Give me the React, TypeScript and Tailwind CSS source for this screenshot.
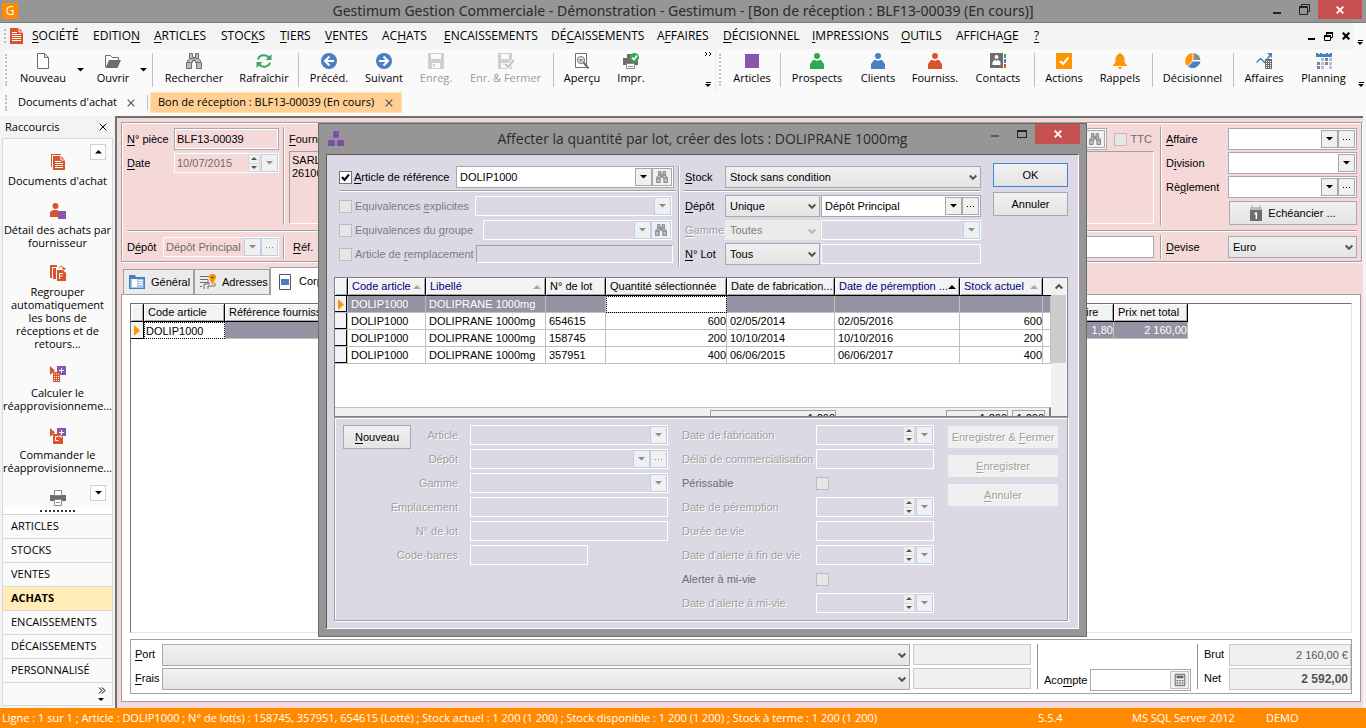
import type { ReactNode } from 'react';

// Menu entries, "_" marks the access key
const menuItems = [
  { label: '_SOCIÉTÉ', width: 'w-[61px]' },
  { label: 'EDITIO_N', width: 'w-[61px]' },
  { label: '_ARTICLES', width: 'w-[67px]' },
  { label: 'STOC_KS', width: 'w-[59px]' },
  { label: '_TIERS', width: 'w-[45px]' },
  { label: '_VENTES', width: 'w-[57px]' },
  { label: 'AC_HATS', width: 'w-[62px]' },
  { label: '_ENCAISSEMENTS', width: 'w-[107px]' },
  { label: 'DÉ_CAISSEMENTS', width: 'w-[106px]' },
  { label: 'A_FFAIRES', width: 'w-[66px]' },
  { label: '_DÉCISIONNEL', width: 'w-[89px]' },
  { label: '_IMPRESSIONS', width: 'w-[89px]' },
  { label: '_OUTILS', width: 'w-[55px]' },
  { label: 'AFFICHA_GE', width: 'w-[78px]' },
  { label: '_?', width: 'w-[16px]' },
];

const shortcuts = [
  { icon: 'docs', lines: ["Documents d'achat"] },
  { icon: 'personBox', lines: ['Détail des achats par', 'fournisseur'] },
  { icon: 'group', lines: ['Regrouper', 'automatiquement', 'les bons de', 'réceptions et de', 'retours...'] },
  { icon: 'calc', lines: ['Calculer le', 'réapprovisionneme...'] },
  { icon: 'order', lines: ['Commander le', 'réapprovisionneme...'] },
  { icon: 'printer', lines: [] },
];

const modules = ['ARTICLES', 'STOCKS', 'VENTES', 'ACHATS', 'ENCAISSEMENTS', 'DÉCAISSEMENTS', 'PERSONNALISÉ'];

const lots = [
  { lot: '', qty: '', made: '', expires: '', stock: '' },
  { lot: '654615', qty: '600', made: '02/05/2014', expires: '02/05/2016', stock: '600' },
  { lot: '158745', qty: '200', made: '10/10/2014', expires: '10/10/2016', stock: '200' },
  { lot: '357951', qty: '400', made: '06/06/2015', expires: '06/06/2017', stock: '400' },
];

const lotColumns = [
  { label: 'Code article', sort: 'gray' },
  { label: 'Libellé', sort: 'gray' },
  { label: 'N° de lot', sort: '' },
  { label: 'Quantité sélectionnée', sort: '' },
  { label: 'Date de fabrication...', sort: '' },
  { label: 'Date de péremption ...', sort: 'black' },
  { label: 'Stock actuel', sort: 'gray' },
];

const icons: Record<string, ReactNode> = {
  newDoc: <path d="M2.5.5h7l4 4v11h-11zM9.5.5v4h4" fill="#fff" stroke="#6d6d6d" />,
  folder: (
    <>
      <path d="M.5 14V2.500h5l2 2h6v3" fill="none" stroke="#6d6d6d" />
      <path d="M4 7h12l-3.500 8H.5z" fill="#6d6d6d" />
    </>
  ),
  binoculars: (
    <>
      <path d="M3.500.5h3v4h3v-4h3v5l2 2v2h1v6h-5v-6h-1v-2h-3v2h-1v6h-5v-6h1v-2l2-2z" fill="#bdbdbd" stroke="#6d6d6d" />
      <path d="M3.500 5.500h3M9.500 5.500h3M1.500 9.500h4M10.500 9.500h4M8 5v3" stroke="#6d6d6d" />
    </>
  ),
  refresh: (
    <>
      <path d="M2 6.500A6 5.500 0 0 1 13 5M14 9.500A6 5.500 0 0 1 3 11" fill="none" stroke="#3aa864" strokeWidth="2" />
      <path d="M15.500 1v6h-6zM.5 15V9h6z" fill="#3aa864" />
    </>
  ),
  prev: (
    <>
      <circle cx="8" cy="8" r="8" fill="#4a7fc1" />
      <path d="M8.500 3.500 4 8l4.500 4.500M4.500 8H13" fill="none" stroke="#fff" strokeWidth="2" />
    </>
  ),
  next: (
    <>
      <circle cx="8" cy="8" r="8" fill="#4a7fc1" />
      <path d="M7.500 3.500 12 8l-4.500 4.500M11.500 8H3" fill="none" stroke="#fff" strokeWidth="2" />
    </>
  ),
  save: <path d="M0 0h16v16H0zM3 1v5h10V1zM4 10v5h8v-5zM5 11h2v3H5z" fill="#cfcfcf" fillRule="evenodd" />,
  saveClose: (
    <>
      <path d="M0 0h14v16H0zM3 1v5h8V1zM3 10v5h8v-5z" fill="#cfcfcf" fillRule="evenodd" />
      <path d="m7 11 3 3 6-7" fill="none" stroke="#fafafa" strokeWidth="4" />
      <path d="m7 11 3 3 6-7" fill="none" stroke="#c4c4c4" strokeWidth="2" />
    </>
  ),
  preview: (
    <>
      <path d="M1.500.5h11v14h-11z" fill="#fff" stroke="#6d6d6d" />
      <circle cx="7" cy="7" r="3.500" fill="#eee" stroke="#6d6d6d" />
      <path d="M5.500 6.500h3M5.500 8h3" stroke="#6d6d6d" />
      <path d="m9.500 9.500 5 6" stroke="#6d6d6d" strokeWidth="2" />
    </>
  ),
  print: (
    <>
      <path d="M4 1h6v4H4zM0 5h15v7H0z" fill="#6d6d6d" />
      <path d="M3.500 10.500h8v5h-8zM5 13.500h5" fill="#fff" stroke="#8b8b8b" />
      <circle cx="11.500" cy="4.500" r="4.500" fill="#2eaa55" />
      <path d="m9 4.500 2 2 3-4" fill="none" stroke="#fff" strokeWidth="1.500" />
    </>
  ),
  printer: (
    <>
      <path d="M0 5h16v6H0z" fill="#6d6d6d" />
      <path d="M4.500.5h7v5h-7zM4.500 9.500h7v6h-7zM6 12.500h4" fill="#fff" stroke="#8b8b8b" />
    </>
  ),
  square: <path d="M1 1h14v14H1z" fill="#8a56ac" />,
  contact: (
    <>
      <path d="M0 0h13v15H0z" fill="#6d6d6d" />
      <circle cx="6.500" cy="4" r="2" fill="#fff" />
      <path d="M2.500 12V9l2-2h1l1 1 1-1h1l2 2v3z" fill="#fff" />
      <path d="M14 1h2v4h-2z" fill="#2eaa55" />
      <path d="M14 6h2v4h-2z" fill="#4a7fc1" />
      <path d="M14 11h2v4h-2z" fill="#d9532c" />
    </>
  ),
  actions: (
    <>
      <path d="M0 0h16v16H0z" fill="#ff9500" />
      <path d="m4 8 3 3 5.500-6.500" fill="none" stroke="#fff" strokeWidth="2" />
    </>
  ),
  bell: (
    <path d="M7 0h2v1c3 1 3.500 3 3.500 6 0 3 1 3.500 2.500 5v1H1v-1c1.500-1.500 2.500-2 2.500-5 0-3 .5-5 3.500-6zM6 14h4l-1 2H7z" fill="#ff9500" />
  ),
  pie: (
    <>
      <path d="M7.500 8V0A8 8 0 0 0 2 13z" fill="#ff9500" />
      <path d="M8.500 7V0A7.500 7.500 0 0 1 15.500 7z" fill="#8b8b8b" />
      <path d="M8 8.500h7.500A8 8 0 0 1 3 13.500z" fill="#4a7fc1" />
    </>
  ),
  affairs: (
    <>
      <path d="m.5 9.500 4-4 4 4 6-7.500" fill="none" stroke="#4a7fc1" strokeWidth="1.500" />
      <path d="M11 0h5v5z" fill="#4a7fc1" />
      <path d="M9 6h7v10H9z" fill="#6d6d6d" />
      <path d="M10 8.500h5M10 10.500h5M10 12.500h5M10 14.500h5" stroke="#fff" strokeDasharray="1 1" />
    </>
  ),
  planning: (
    <>
      <path d="M0 0h2v1h2V0h2v1h4V0h2v1h2V0h2v4H0z" fill="#4a7fc1" />
      <path d="M5 5h3v3H5zM13 5h3v3h-3zM5 9h3v3H5zM13 9h3v3h-3zM5 13h3v3H5zM13 13h3v3h-3z" fill="#a9c1de" />
      <path d="M9 5h3v3H9zM1 9h3v3H1zM9 9h3v3H9zM1 13h3v3H1z" fill="#7d8794" />
    </>
  ),
  docs: (
    <>
      <path d="M1 0h10v1H2v12H1z" fill="#d9532c" />
      <path d="M3 2h8l4 4v10H3z" fill="#d9532c" />
      <path d="M11 2v4h4M5 7.500h6M5 9.500h8M5 11.500h8M5 13.500h8" fill="none" stroke="#fff" />
    </>
  ),
  personBox: (
    <>
      <circle cx="5.500" cy="3" r="3" fill="#d9532c" />
      <path d="M0 14V9l3-2h5v7z" fill="#d9532c" />
      <path d="M8 8h8v8H8z" fill="#8a56ac" />
    </>
  ),
  group: (
    <>
      <path d="M0 0h7v2H2v11H0zM3 3h3v11H3z" fill="#d9532c" />
      <path d="M7 5h6l3 3v8H7z" fill="#d9532c" />
      <path d="M9.500 14V8.500H13M9.500 11h3" fill="none" stroke="#fff" />
      <path d="M9 2.500q3-3 5 1" fill="none" stroke="#d9532c" />
      <path d="M12 3h4l-2 2.500z" fill="#d9532c" />
    </>
  ),
  calc: (
    <>
      <path d="m0 0 5 4.500L0 9z" fill="#d9532c" />
      <path d="M7 0h9v9H7z" fill="#8a56ac" />
      <path d="M9 4.500h5M11.500 2v5" stroke="#fff" />
      <path d="M3 6h7v10H3z" fill="#d9532c" />
      <path d="M4 8h5M4 10.500h5M4 12.500h5M4 14.500h5" stroke="#fff" strokeDasharray="1 1" />
    </>
  ),
  order: (
    <>
      <path d="m0 0 5 4.500L0 9z" fill="#d9532c" />
      <path d="M7 0h9v8H7z" fill="#8a56ac" />
      <path d="M9 4.500h5M11.500 2v5" stroke="#fff" />
      <path d="M3 6h7l3 3v7H3z" fill="#d9532c" />
      <path d="M8.500 8.500h-3v4h3M10 7v2h2" fill="none" stroke="#fff" />
    </>
  ),
  general: (
    <>
      <path d="M0 1h6l1 2h9v12H0z" fill="#4a7fc1" />
      <path d="M1.500 5h13v9h-13z" fill="#a9c8ec" />
      <path d="M3 5h5v8H3z" fill="#fff" />
      <path d="M9.500 6.500h4M9.500 8.500h4M9.500 10.500h4" stroke="#fff" />
    </>
  ),
  address: (
    <>
      <path d="M0 2.500h9M0 5.500h8v3H0M4 15v-5h5v-2M8 15v-3h7v-3M0 12.500h2" fill="none" stroke="#6d6d6d" />
      <path d="M12.500 11 9.500 5a3.500 3.500 0 1 1 6 0z" fill="#ff9500" />
      <circle cx="12.500" cy="3.500" r="1" fill="#333" />
    </>
  ),
  body: (
    <>
      <path d="M2.500.5h11v15h-11z" fill="#fff" stroke="#555" />
      <path d="M4 5h8v6H4z" fill="#4a7fc1" />
    </>
  ),
  calendar: (
    <>
      <path d="M2 0h2v3H2zM12 0h2v3h-2zM0 2h16v3H0z" fill="#bdbdbd" />
      <path d="M0 5h16v11H0z" fill="#6d6d6d" />
      <path d="M6 8.500h2.500V14" fill="none" stroke="#fff" strokeWidth="2" />
    </>
  ),
  bricks: (
    <>
      <path d="M5 0h6v7H5zM0 9h7v6H0zM9 9h7v6H9z" fill="#8e52b5" />
      <path d="M5 2.500h6M5 4.500h6M0 11.500h7M0 13.500h7M9 11.500h7M9 13.500h7M7.500 0v7M2.500 9v6M4.500 9v6M11.500 9v6M13.500 9v6" stroke="#6b4a85" strokeWidth=".6" />
    </>
  ),
  orangeDoc: (
    <>
      <path d="M0 0h9l4 4v12H0z" fill="#d9532c" />
      <path d="M9 0v4h4M2 4.500h5M2 6.500h9M2 8.500h9M2 10.500h9M2 12.500h9" fill="none" stroke="#fff" />
    </>
  ),
  calculator: (
    <>
      <path d="M2.500 1.500h11v13h-11z" fill="#eee" stroke="#555" />
      <path d="M4 3h8v3H4z" fill="#666" />
      <path d="M4 8.500h8M4 10.500h8M4 12.500h8" stroke="#555" strokeDasharray="2 1" />
    </>
  ),
};

function Icon({ name }: { name: string }) {
  return (
    <svg className="h-4 w-4 shrink-0" viewBox="0 0 16 16" aria-hidden="true">
      {icons[name]}
    </svg>
  );
}

function Person({ color }: { color: string }) {
  return (
    <svg className="h-4 w-4" viewBox="0 0 16 16" fill={color} aria-hidden="true">
      <circle cx="8" cy="3" r="3" />
      <path d="M1 16v-5l3-4h2l2 1 2-1h2l3 4v5z" />
    </svg>
  );
}

function Tri({ up = false, size = 'w-[7px]' }: { up?: boolean; size?: string }) {
  return (
    <svg className={`${size} shrink-0`} viewBox="0 0 8 4" fill="currentColor" aria-hidden="true">
      <path d={up ? 'M0 4h8L4 0z' : 'M0 0h8L4 4z'} />
    </svg>
  );
}

function Key({ text }: { text: string }) {
  const [before, after] = text.split('_');
  if (after === undefined) return <>{text}</>;
  return (
    <>
      {before}
      <span className="underline underline-offset-2">{after[0]}</span>
      {after.slice(1)}
    </>
  );
}

function Grip({ height = 'h-8' }: { height?: string }) {
  return <div className={`${height} ml-0.5 mr-1.5 w-0 shrink-0 border-l-2 border-dotted border-[#bdbdbd]`} />;
}

function Tool({ icon, label, width, disabled = false }: { icon: ReactNode; label: string; width: string; disabled?: boolean }) {
  return (
    <button
      type="button"
      disabled={disabled}
      className={`${width} flex shrink-0 flex-col items-center whitespace-nowrap pt-1 disabled:text-[#9a9a9a]`}
    >
      {typeof icon === 'string' ? <Icon name={icon} /> : icon}
      <span className="leading-[18px]">{label}</span>
    </button>
  );
}

function ToolSep() {
  return <div className="my-1 ml-[3px] mr-0.5 w-px shrink-0 bg-[#c0c0c0]" />;
}

function More({ top = false }: { top?: boolean }) {
  return (
    <button type="button" aria-label="Plus d'options" className="ml-auto flex w-3 shrink-0 flex-col items-center pb-1 pt-0.5">
      {top && (
        <svg className="h-2 w-2" viewBox="0 0 8 8" aria-hidden="true">
          <path d="m1 1 2 2-2 2M5 1l2 2-2 2" fill="none" stroke="#000" />
        </svg>
      )}
      <span className="mt-auto mb-px h-px w-[5px] bg-black" />
      <Tri size="w-[6px]" />
    </button>
  );
}

function VLine() {
  return <div className="w-0.5 shrink-0 border-l border-r border-l-[#a0a0a0] border-r-white" />;
}

function HLine() {
  return <div className="h-0.5 shrink-0 border-b border-t border-b-white border-t-[#a0a0a0]" />;
}

// Square button at the end of a field
function EndButton({ children, label, width = 'w-[17px]', disabled = false }: { children: ReactNode; label: string; width?: string; disabled?: boolean }) {
  return (
    <button
      type="button"
      aria-label={label}
      disabled={disabled}
      className={`${width} flex h-full shrink-0 items-center justify-center border border-[#a8a8a8] bg-[#f0f0f0] text-black disabled:border-[#b9d1ea] disabled:text-[#8c8c8c]`}
    >
      {children}
    </button>
  );
}

type FieldProps = {
  id: string;
  label?: string;
  width?: string;
  value?: string;
  arrow?: boolean;
  dots?: boolean;
  search?: boolean;
  spin?: boolean;
  disabled?: boolean;
};

function Field({ id, label, width = 'flex-1', value = '', arrow, dots, search, spin, disabled = false }: FieldProps) {
  const box = disabled ? 'h-5 border-white bg-transparent text-[#6d6d6d]' : 'h-[22px] border-[#a8a8b0] bg-white p-px';
  return (
    <div className={`${width} ${box} flex min-w-0 shrink-0 items-center border`}>
      <input
        id={id}
        aria-label={label}
        defaultValue={value}
        disabled={disabled}
        className="h-full w-0 min-w-0 flex-1 bg-transparent px-0.5 outline-none"
      />
      {spin && (
        <span className="mr-px flex h-full w-3 shrink-0 flex-col border border-[#d8d8d8] bg-[#f0f0f0] text-[#555]">
          <button type="button" aria-label="Augmenter" disabled={disabled} className="flex flex-1 items-center justify-center border-b border-[#d8d8d8]">
            <Tri up size="w-[6px]" />
          </button>
          <button type="button" aria-label="Diminuer" disabled={disabled} className="flex flex-1 items-center justify-center">
            <Tri size="w-[6px]" />
          </button>
        </span>
      )}
      {arrow && (
        <EndButton label="Dérouler" disabled={disabled}>
          <Tri />
        </EndButton>
      )}
      {dots && (
        <EndButton label="Parcourir" disabled={disabled}>
          <svg className="w-[9px]" viewBox="0 0 9 1" fill="currentColor" aria-hidden="true">
            <path d="M1 0h1v1H1zM4 0h1v1H4zM7 0h1v1H7z" />
          </svg>
        </EndButton>
      )}
      {search && (
        <EndButton label="Rechercher" width="w-5" disabled={disabled}>
          <svg className="h-3 w-3" viewBox="0 0 16 16" aria-hidden="true">
            {icons.binoculars}
          </svg>
        </EndButton>
      )}
    </div>
  );
}

function Select({ id, label, width = 'flex-1', value = '', disabled = false }: { id: string; label?: string; width?: string; value?: string; disabled?: boolean }) {
  return (
    <div className={`${width} relative min-w-0 shrink-0`}>
      <select
        id={id}
        aria-label={label}
        disabled={disabled}
        className="block h-[22px] w-full appearance-none border border-[#a8a8b0] bg-linear-to-b from-[#f1f1f1] to-[#e4e4e4] px-1 text-black outline-none disabled:h-5 disabled:border-[#ebebeb] disabled:bg-[#ebebeb] disabled:bg-none disabled:text-[#7d7d7d] disabled:opacity-100"
      >
        <option>{value}</option>
      </select>
      <svg className={`pointer-events-none absolute right-1 top-2 h-2 w-2 ${disabled ? 'text-[#b8b8b8]' : 'text-[#555]'}`} viewBox="0 0 8 8" aria-hidden="true">
        <path d="m.7 1.500 3.300 3.300 3.300-3.300" fill="none" stroke="currentColor" strokeWidth="2" />
      </svg>
    </div>
  );
}

function Check({ id, checked = false, disabled = false }: { id: string; checked?: boolean; disabled?: boolean }) {
  return (
    <span className="relative flex h-[13px] w-[13px] shrink-0">
      <input
        id={id}
        type="checkbox"
        defaultChecked={checked}
        disabled={disabled}
        className="h-[13px] w-[13px] appearance-none border border-[#707070] bg-white disabled:border-[#bcbcbc] disabled:bg-[#e6e6e6]"
      />
      {checked && (
        <svg className="pointer-events-none absolute left-0.5 top-0.5 h-[9px] w-[9px]" viewBox="0 0 9 9" aria-hidden="true">
          <path d="m1 4 2.500 3L8 1.500" fill="none" stroke="#000" strokeWidth="2" />
        </svg>
      )}
    </span>
  );
}

function WindowX({ size = 'h-2 w-2', stroke = '1.8' }: { size?: string; stroke?: string }) {
  return (
    <svg className={size} viewBox="0 0 8 8" aria-hidden="true">
      <path d="m.7.7 6.600 6.600M7.300.7.7 7.300" fill="none" stroke="currentColor" strokeWidth={stroke} />
    </svg>
  );
}

function TitleBar() {
  return (
    <header className="relative flex h-[23px] shrink-0 items-start border-b border-[#7c7c7c] bg-[#969696]">
      <div className="ml-0.5 mt-[3px] flex h-4 w-4 items-center justify-center bg-[#ff8a00] text-xs text-white">G</div>
      <h1 className="flex-1 pr-[18px] text-center font-['Noto_Sans','Open_Sans',sans-serif] text-[14px] leading-[22px] text-[#2b2b2b]">
        Gestimum Gestion Commerciale - Démonstration - Gestimum - [Bon de réception : BLF13-00039 (En cours)]
      </h1>
      <div className="absolute right-1 top-0 flex h-[19px] items-center bg-[#969696]">
        <button type="button" aria-label="Réduire" className="flex h-full w-[26px] items-center justify-center pt-1.5">
          <span className="h-0.5 w-2 bg-[#222]" />
        </button>
        <button type="button" aria-label="Restaurer" className="flex h-full w-[28px] items-center justify-center">
          <svg className="h-[11px] w-[11px]" viewBox="0 0 11 11" aria-hidden="true">
            <path d="M2.500 2V.5h8v7H9M.5 2.500h8v8h-8zM.5 3.500h8" fill="none" stroke="#222" />
          </svg>
        </button>
        <button type="button" aria-label="Fermer" className="flex h-full w-[44px] items-center justify-center bg-[#c75050] text-white">
          <WindowX />
        </button>
      </div>
    </header>
  );
}

function MenuBar() {
  return (
    <nav className="flex h-[26px] shrink-0 items-center bg-[#f3f3f3] pl-1">
      <div className="mr-1 h-3.5 w-0 border-l-2 border-dotted border-[#bdbdbd]" />
      <svg className="mr-[9px] h-4 w-[13px]" viewBox="0 0 13 16" aria-hidden="true">
        {icons.orangeDoc}
      </svg>
      {menuItems.map((item) => (
        <button key={item.label} type="button" className={`${item.width} shrink-0 whitespace-nowrap text-left`}>
          <Key text={item.label} />
        </button>
      ))}
      <div className="ml-auto flex h-full items-center gap-1 text-black">
        <div className="flex items-center gap-[9px]">
          <button type="button" aria-label="Réduire le document" className="pt-1.5">
            <span className="block h-0.5 w-[7px] bg-black" />
          </button>
          <button type="button" aria-label="Restaurer le document">
            <svg className="h-[9px] w-[9px]" viewBox="0 0 9 9" aria-hidden="true">
              <path d="M2.500 3V1h6v4.500H7M.5 4h6v4.500h-6z" fill="none" stroke="#000" />
              <path d="M2 1h7M0 4h7" stroke="#000" strokeWidth="2" />
            </svg>
          </button>
          <button type="button" aria-label="Fermer le document">
            <WindowX stroke="2.200" />
          </button>
        </div>
        <div className="flex h-full bg-[#fafafa]">
          <More />
        </div>
      </div>
    </nav>
  );
}

function Toolbar() {
  return (
    <div className="flex h-[42px] shrink-0 gap-[3px] bg-[#f3f3f3] pl-[3px] text-[11px]">
      <div className="flex w-[711px] shrink-0 items-stretch rounded bg-[#fafafa]">
        <div className="flex items-center">
          <Grip />
        </div>
        <Tool icon="newDoc" label="Nouveau" width="w-[60px]" />
        <button type="button" aria-label="Options de création" className="flex w-[15px] items-center justify-center">
          <Tri />
        </button>
        <Tool icon="folder" label="Ouvrir" width="w-[50px]" />
        <button type="button" aria-label="Options d'ouverture" className="flex w-[11px] items-center justify-center">
          <Tri />
        </button>
        <ToolSep />
        <Tool icon="binoculars" label="Rechercher" width="w-[78px]" />
        <Tool icon="refresh" label="Rafraîchir" width="w-[62px]" />
        <ToolSep />
        <Tool icon="prev" label="Précéd." width="w-[56px]" />
        <Tool icon="next" label="Suivant" width="w-[54px]" />
        <Tool icon="save" label="Enreg." width="w-[50px]" disabled />
        <Tool icon="saveClose" label="Enr. & Fermer" width="w-[89px]" disabled />
        <ToolSep />
        <Tool icon="preview" label="Aperçu" width="w-[52px]" />
        <Tool icon="print" label="Impr." width="w-[46px]" />
        <More top />
      </div>
      <div className="flex min-w-0 flex-1 items-stretch rounded bg-[#fafafa]">
        <div className="flex items-center">
          <Grip />
        </div>
        <Tool icon="square" label="Articles" width="w-[50px]" />
        <ToolSep />
        <Tool icon={<Person color="#2eaa55" />} label="Prospects" width="w-[68px]" />
        <Tool icon={<Person color="#4a7fc1" />} label="Clients" width="w-[54px]" />
        <Tool icon={<Person color="#d9532c" />} label="Fourniss." width="w-[60px]" />
        <Tool icon="contact" label="Contacts" width="w-[66px]" />
        <ToolSep />
        <Tool icon="actions" label="Actions" width="w-[54px]" />
        <Tool icon="bell" label="Rappels" width="w-[58px]" />
        <ToolSep />
        <Tool icon="pie" label="Décisionnel" width="w-[75px]" />
        <ToolSep />
        <Tool icon="affairs" label="Affaires" width="w-[56px]" />
        <Tool icon="planning" label="Planning" width="w-[63px]" />
        <More />
      </div>
    </div>
  );
}

function DocumentTabs() {
  return (
    <div className="flex h-[25px] shrink-0 items-center bg-[#fafafa] pb-0.5 pl-[3px] text-[11px]">
      <Grip height="h-4" />
      <button type="button" className="flex w-[135px] items-center justify-between whitespace-nowrap border-r border-[#c0c0c0] pl-[5px] pr-3">
        Documents d'achat
        <span className="text-[#555]">
          <WindowX stroke="1.200" />
        </span>
      </button>
      <button
        type="button"
        className="ml-0.5 flex h-[21px] w-[252px] items-center justify-between whitespace-nowrap border border-[#ffe3a8] bg-[#ffcf93] pl-[7px] pr-2"
      >
        Bon de réception : BLF13-00039 (En cours)
        <span className="text-[#555]">
          <WindowX stroke="1.200" />
        </span>
      </button>
    </div>
  );
}

function Sidebar() {
  return (
    <aside className="flex w-[115px] shrink-0 flex-col bg-[#f3f3f3] pb-0.5 pl-0.5 pr-0.5">
      <div className="flex h-[22px] shrink-0 items-center justify-between pl-[3px] pr-1.5">
        <h2 className="text-[11px]">Raccourcis</h2>
        <button type="button" aria-label="Fermer les raccourcis">
          <WindowX stroke="1" />
        </button>
      </div>
      <div className="relative flex min-h-0 flex-1 flex-col border border-[#d8d8d8] bg-[#fafafa]">
        <button type="button" aria-label="Monter" className="absolute right-1.5 top-[5px] flex h-4 w-4 items-center justify-center border border-[#d0d0d0] bg-white">
          <Tri up />
        </button>
        <div className="relative flex min-h-0 flex-1 flex-col gap-4 overflow-hidden pt-[15px]">
          {shortcuts.map((item) => (
            <a key={item.icon} href="#" className="flex shrink-0 flex-col items-center gap-1 text-center">
              <Icon name={item.icon} />
              <span className="text-[11px] leading-[13px]">
                {item.lines.map((line) => (
                  <span key={line} className="block whitespace-nowrap">
                    {line}
                  </span>
                ))}
              </span>
            </a>
          ))}
          <button type="button" aria-label="Descendre" className="absolute bottom-1.5 right-1.5 flex h-4 w-4 items-center justify-center border border-[#d0d0d0] bg-white">
            <Tri />
          </button>
        </div>
        <div className="flex h-[7px] shrink-0 items-center justify-center bg-white">
          <div className="w-[35px] border-t-2 border-dotted border-[#333]" />
        </div>
        {modules.map((name) => (
          <button
            key={name}
            type="button"
            className={
              name === 'ACHATS'
                ? 'h-6 shrink-0 border-t border-[#d8d8d8] bg-[#ffedb5] pl-2 text-left text-[11px] font-bold'
                : 'h-6 shrink-0 border-t border-[#d8d8d8] pl-2 text-left text-[11px]'
            }
          >
            {name}
          </button>
        ))}
        <button type="button" aria-label="Configurer les boutons" className="flex h-[23px] shrink-0 flex-col items-end gap-0.5 border-t border-[#d8d8d8] pr-1.5 pt-1">
          <svg className="h-[7px] w-2" viewBox="0 0 8 7" aria-hidden="true">
            <path d="m1 .5 3 3-3 3M4 .5l3 3-3 3" fill="none" stroke="#000" />
          </svg>
          <Tri size="mr-0.5 mt-0.5 w-[6px]" />
        </button>
      </div>
    </aside>
  );
}

function OrderHeader() {
  return (
    <section className="shrink-0 border border-[#a0a0a0] pb-0.5 pl-[5px] pr-1 pt-1 shadow-[inset_1px_1px_0_#fff,1px_1px_0_#fff]">
      <div className="flex h-[98px] gap-1">
        <div className="w-[152px] shrink-0">
          <div className="flex h-6 items-center">
            <label htmlFor="piece" className="w-[47px]">
              <Key text="_N° pièce" />
            </label>
            <input id="piece" defaultValue="BLF13-00039" className="h-[22px] w-[105px] border border-[#a8a8b0] bg-transparent px-0.5 shadow-[inset_0_0_0_1px_#fff]" />
          </div>
          <div className="flex h-6 items-center">
            <label htmlFor="date" className="w-[47px]">
              <Key text="_Date" />
            </label>
            <Field id="date" value="10/07/2015" spin arrow disabled />
          </div>
        </div>
        <VLine />
        <div className="min-w-0 flex-1">
          <div className="flex h-6 items-center gap-[7px] pr-1">
            <label htmlFor="supplier" className="w-16">
              <Key text="_Fournisseur" />
            </label>
            <Field id="supplier" search />
            <span className="flex items-center gap-1 text-[#6d6d6d]">
              <Check id="ttc" disabled />
              <label htmlFor="ttc">TTC</label>
            </span>
          </div>
          <div className="mr-0.5 h-[73px] whitespace-pre-line border border-b-white border-l-[#a0a0a0] border-r-white border-t-[#a0a0a0] px-0.5 pt-0.5 leading-[13px]">
            {'SARL\n26100'}
          </div>
        </div>
        <VLine />
        <div className="w-[191px] shrink-0">
          <div className="flex h-6 items-center">
            <label htmlFor="affaire" className="w-[62px]">
              <Key text="_Affaire" />
            </label>
            <Field id="affaire" arrow dots />
          </div>
          <div className="flex h-6 items-center">
            <label htmlFor="division" className="w-[62px]">
              <Key text="D_ivision" />
            </label>
            <Field id="division" arrow />
          </div>
          <div className="flex h-6 items-center">
            <label htmlFor="reglement" className="w-[62px]">
              <Key text="Rè_glement" />
            </label>
            <Field id="reglement" arrow dots />
          </div>
          <button type="button" className="ml-[63px] mt-0.5 flex h-6 w-[128px] items-center justify-center gap-1.5 border border-[#a8a8b0] bg-linear-to-b from-[#f1f1f1] to-[#e4e4e4]">
            <svg className="h-4 w-3" viewBox="0 0 16 16" preserveAspectRatio="none" aria-hidden="true">
              {icons.calendar}
            </svg>
            Echéancier ...
          </button>
        </div>
      </div>
      <div className="mb-[3px] mt-[5px]">
        <HLine />
      </div>
      <div className="flex h-6 gap-1">
        <div className="flex w-[152px] shrink-0 items-center">
          <label htmlFor="depot" className="w-9">
            <Key text="D_épôt" />
          </label>
          <Field id="depot" value="Dépôt Principal" arrow dots disabled />
        </div>
        <VLine />
        <div className="flex min-w-0 flex-1 items-center pl-1 pr-0.5">
          <label htmlFor="ref" className="w-8">
            <Key text="_Réf." />
          </label>
          <Field id="ref" />
        </div>
        <VLine />
        <div className="flex w-[191px] shrink-0 items-center">
          <label htmlFor="devise" className="w-[62px]">
            <Key text="_Devise" />
          </label>
          <Select id="devise" value="Euro" />
        </div>
      </div>
    </section>
  );
}

const headCell =
  'h-[18px] border-b border-r border-black bg-[#f3f3f3] px-1 text-left font-normal shadow-[inset_1px_1px_0_#fff,inset_-1px_-1px_0_#a8a8a8]';

function RowMarker() {
  return (
    <svg className="ml-[3px] h-[11px] w-[6px]" viewBox="0 0 6 11" aria-hidden="true">
      <path d="M0 0v11l6-5.500z" fill="#ff9500" />
    </svg>
  );
}

function OrderLines() {
  return (
    <div className="min-h-0 flex-1 border border-b-[#e3e3e3] border-l-[#707070] border-r-[#e3e3e3] border-t-[#707070] bg-white">
      <table className="w-[1057px] table-fixed border-separate border-spacing-0 whitespace-nowrap">
        <colgroup>
          <col className="w-[13px]" />
          <col className="w-[81px]" />
          <col />
          <col className="w-[96px]" />
          <col className="w-[74px]" />
        </colgroup>
        <thead>
          <tr>
            <th className={headCell} aria-label="Sélection" />
            <th className={headCell}>Code article</th>
            <th className={headCell}>Référence fournisseur</th>
            <th className={headCell}>Prix net unitaire</th>
            <th className={headCell}>Prix net total</th>
          </tr>
        </thead>
        <tbody>
          <tr className="bg-[#9393a3] text-white">
            <td className="h-[17px] border-b border-r border-black bg-[#f3f3f3]">
              <RowMarker />
            </td>
            <td className="border border-dotted border-black bg-white px-px leading-[14px] text-black">DOLIP1000</td>
            <td className="border-b border-r border-[#c0c0c0]" />
            <td className="border-b border-r border-[#c0c0c0] text-right">1,80</td>
            <td className="border-b border-r border-[#c0c0c0] text-right">2 160,00</td>
          </tr>
        </tbody>
      </table>
    </div>
  );
}

function OrderTotals() {
  return (
    <div className="flex h-[55px] shrink-0 gap-1.5 border border-[#a0a0a0] pl-1">
      <div className="flex flex-1 flex-col justify-center gap-0.5">
        {['_Port', '_Frais'].map((name) => (
          <div key={name} className="flex items-center">
            <label htmlFor={name} className="w-[27px]">
              <Key text={name} />
            </label>
            <Select id={name} />
            <input aria-label="Montant" disabled className="ml-[3px] h-[21px] w-[118px] border border-[#c8c8c8] bg-[#f0f0f0]" />
          </div>
        ))}
      </div>
      <div className="my-1 w-px bg-[#8c8c8c]" />
      <div className="flex w-[147px] shrink-0 items-end pb-0.5">
        <label htmlFor="acompte" className="flex h-[22px] w-[46px] items-center">
          <span>
            <Key text="Aco_mpte" />
          </span>
        </label>
        <div className="flex h-[22px] flex-1 items-center border border-[#a8a8b0] bg-white p-px">
          <input id="acompte" className="h-full w-0 min-w-0 flex-1 px-0.5" />
          <button type="button" aria-label="Calculatrice" className="flex h-full w-[19px] items-center justify-center border border-[#c0c0c0] bg-[#f0f0f0]">
            <svg className="h-3.5 w-3.5" viewBox="0 0 16 16" aria-hidden="true">
              {icons.calculator}
            </svg>
          </button>
        </div>
      </div>
      <div className="my-1 w-px bg-[#8c8c8c]" />
      <div className="flex w-[147px] shrink-0 flex-col justify-center gap-0.5">
        <div className="flex items-center">
          <label htmlFor="brut" className="w-[25px]">
            Brut
          </label>
          <input id="brut" readOnly value="2 160,00 €" className="h-[22px] w-0 flex-1 border border-[#c8c8c8] bg-[#f0f0f0] px-0.5 text-right text-[#555]" />
        </div>
        <div className="flex items-center">
          <label htmlFor="net" className="w-[25px]">
            Net
          </label>
          <input id="net" readOnly value="2 592,00" className="h-[22px] w-0 flex-1 border border-[#c8c8c8] bg-[#f0f0f0] px-0.5 text-right text-xs font-bold text-[#555]" />
        </div>
      </div>
    </div>
  );
}

function OrderForm() {
  return (
    <main className="mr-[3px] flex min-w-0 flex-1 flex-col border-l-2 border-t-2 border-[#707070] bg-[#f5d9d9] pb-1.5 pl-1 pr-px pt-1 font-['Liberation_Sans',Arial,sans-serif] text-[11px]">
      <OrderHeader />
      <div className="flex h-8 shrink-0 items-end pl-0.5">
        <button type="button" className="flex h-[25px] w-[71px] items-center gap-1.5 border border-b-0 border-[#a0a0a0] bg-[#ebebeb] pl-[5px]">
          <Icon name="general" />
          Général
        </button>
        <button type="button" className="flex h-[25px] w-[76px] items-center gap-1.5 border border-b-0 border-[#a0a0a0] bg-[#ebebeb] pl-[5px]">
          <Icon name="address" />
          Adresses
        </button>
        <button type="button" className="relative -mb-px flex h-[28px] w-[66px] items-center gap-1.5 border border-b-0 border-[#a0a0a0] bg-white pl-1.5">
          <Icon name="body" />
          Corps
        </button>
      </div>
      <section className="mr-px flex min-h-0 flex-1 flex-col gap-1.5 border border-[#a0a0a0] bg-white px-2 pb-[7px] pt-2">
        <OrderLines />
        <OrderTotals />
      </section>
    </main>
  );
}

function LotFilters() {
  return (
    <div className="flex pl-3 pr-2.5 pt-2">
      <div className="mt-[3px] flex w-[337px] shrink-0 flex-col">
        <div className="flex h-[22px] items-center gap-0.5">
          <Check id="ref-article" checked />
          <label htmlFor="ref-article" className="w-[100px] whitespace-nowrap">
            <Key text="_Article de référence" />
          </label>
          <Field id="ref-value" label="Article de référence" width="w-[218px]" value="DOLIP1000" arrow search />
        </div>
        <div className="my-0.5">
          <HLine />
        </div>
        <div className="flex h-6 items-center gap-[3px] pr-1 text-[#7d7d7d]">
          <Check id="equiv" disabled />
          <label htmlFor="equiv" className="w-[117px] whitespace-nowrap">
            <Key text="Equivalences _explicites" />
          </label>
          <Field id="equiv-value" label="Equivalences explicites" arrow disabled />
        </div>
        <div className="flex h-6 items-center gap-[3px] pr-1 text-[#7d7d7d]">
          <Check id="equiv-group" disabled />
          <label htmlFor="equiv-group" className="w-[125px] whitespace-nowrap">
            <Key text="Equivalences du _groupe" />
          </label>
          <Field id="equiv-group-value" label="Equivalences du groupe" arrow search disabled />
        </div>
        <div className="flex h-6 items-center gap-[3px] pr-[3px] text-[#7d7d7d]">
          <Check id="replace" disabled />
          <label htmlFor="replace" className="w-[118px] whitespace-nowrap">
            <Key text="Article de _remplacement" />
          </label>
          <input aria-label="Article de remplacement" disabled className="h-[18px] w-0 flex-1 border border-b-white border-l-[#a0a0a0] border-r-white border-t-[#a0a0a0]" />
        </div>
      </div>
      <div className="ml-0.5 mt-[3px] flex">
        <VLine />
      </div>
      <div className="ml-[3px] mt-[3px] flex min-w-0 flex-1 flex-col">
        <div className="flex h-[22px] items-center pl-0.5">
          <label htmlFor="stock" className="w-10">
            <Key text="_Stock" />
          </label>
          <Select id="stock" value="Stock sans condition" />
        </div>
        <div className="my-0.5">
          <HLine />
        </div>
        <div className="flex h-6 items-center pl-0.5">
          <label htmlFor="lot-depot" className="w-10">
            <Key text="_Dépôt" />
          </label>
          <Select id="lot-depot" width="w-[95px]" value="Unique" />
          <span className="w-px" />
          <Field id="lot-depot-value" label="Dépôt" value="Dépôt Principal" arrow dots />
        </div>
        <div className="flex h-6 items-center pl-0.5">
          <label htmlFor="gamme" className="w-10 text-[#a0a0a0] [text-shadow:1px_1px_0_#fff]">
            <Key text="_Gamme" />
          </label>
          <Select id="gamme" width="w-[95px]" value="Toutes" disabled />
          <span className="w-px" />
          <Field id="gamme-value" label="Gamme" arrow disabled />
        </div>
        <div className="flex h-6 items-center pl-0.5">
          <label htmlFor="lot-number" className="w-10">
            <Key text="_N° Lot" />
          </label>
          <Select id="lot-number" width="w-[95px]" value="Tous" />
          <span className="w-px" />
          <Field id="lot-number-value" label="N° Lot" disabled />
        </div>
      </div>
      <div className="ml-3 flex w-[75px] shrink-0 flex-col gap-[5px]">
        <button type="button" className="h-6 border border-[#3d87d0] bg-linear-to-b from-[#f1f1f1] to-[#e4e4e4]">
          OK
        </button>
        <button type="button" className="h-6 border border-[#a8a8b0] bg-linear-to-b from-[#f1f1f1] to-[#e4e4e4]">
          Annuler
        </button>
      </div>
    </div>
  );
}

function LotTable() {
  return (
    <div className="ml-[7px] mr-2.5 mt-[11px] flex h-[140px] shrink-0 border border-[#808080] bg-white">
      <div className="flex min-w-0 flex-1 flex-col">
        <table className="w-full table-fixed border-separate border-spacing-0 whitespace-nowrap">
          <colgroup>
            <col className="w-[13px]" />
            <col className="w-[78px]" />
            <col className="w-[120px]" />
            <col className="w-[60px]" />
            <col className="w-[121px]" />
            <col className="w-[108px]" />
            <col className="w-[125px]" />
            <col className="w-[83px]" />
            <col />
          </colgroup>
          <thead>
            <tr>
              <th className={headCell} aria-label="Sélection" />
              {lotColumns.map((col) => (
                <th key={col.label} className={headCell}>
                  <span className="flex items-center justify-between">
                    <span className={col.sort ? 'text-[#000080]' : 'text-black'}>{col.label}</span>
                    {col.sort && (
                      <span className={col.sort === 'black' ? 'text-black' : 'text-[#a8a8a8]'}>
                        <Tri up size="w-2" />
                      </span>
                    )}
                  </span>
                </th>
              ))}
              <th className="h-[18px] border-b border-black bg-[#f3f3f3]" aria-label="Suite" />
            </tr>
          </thead>
          <tbody>
            {lots.map((row, i) => (
              <tr
                key={i}
                className={
                  i === 0
                    ? 'bg-[#9393a3] text-white [&>td]:border-b [&>td]:border-r [&>td]:border-[#c0c0c0]'
                    : '[&>td]:border-b [&>td]:border-r [&>td]:border-[#c0c0c0]'
                }
              >
                <td className="h-[17px] bg-[#f3f3f3] shadow-[inset_-1px_-1px_0_#000]">{i === 0 && <RowMarker />}</td>
                <td className="pl-[3px]">DOLIP1000</td>
                <td className="pl-[3px]">DOLIPRANE 1000mg</td>
                <td className="pl-[3px]">{row.lot}</td>
                <td className={i === 0 ? 'bg-white outline-1 -outline-offset-1 outline-dotted outline-black' : 'text-right'}>{row.qty}</td>
                <td className="pl-[3px]">{row.made}</td>
                <td className="pl-[3px]">{row.expires}</td>
                <td className="text-right">{row.stock}</td>
                <td />
              </tr>
            ))}
          </tbody>
        </table>
        <div className="mt-auto flex h-[9px] justify-end gap-1 overflow-hidden border-r-2 border-t border-r-[#808080] border-t-[#c0c0c0] bg-[#f0f0f0] pr-1 pt-0.5 text-right leading-[14px]">
          <span className="mr-[106px] h-4 w-[126px] border border-[#a0a0a0]">1 200</span>
          <span className="h-4 w-[62px] border border-[#a0a0a0]">1 200</span>
          <span className="h-4 w-[33px] border border-[#a0a0a0]">1 200</span>
        </div>
      </div>
      <div className="flex w-4 shrink-0 flex-col border-r border-white bg-[#f0f0f0] text-[#555]">
        <div className="flex h-[17px] items-center justify-center">
          <svg className="h-2 w-2" viewBox="0 0 8 8" aria-hidden="true">
            <path d="m.7 5.500 3.300-3.300 3.300 3.300" fill="none" stroke="currentColor" strokeWidth="2" />
          </svg>
        </div>
        <div className="h-[68px] bg-[#cdcdcd]" />
      </div>
    </div>
  );
}

const etched = 'text-[#a0a0a0] [text-shadow:1px_1px_0_#fff]';

const lotFields = [
  { label: 'Article', arrow: true, dots: false, width: 'w-[198px]' },
  { label: 'Dépôt', arrow: true, dots: true, width: 'w-[198px]' },
  { label: 'Gamme', arrow: true, dots: false, width: 'w-[198px]' },
  { label: 'Emplacement', arrow: false, dots: false, width: 'w-[198px]' },
  { label: 'N° de lot', arrow: false, dots: false, width: 'w-[198px]' },
  { label: 'Code-barres', arrow: false, dots: false, width: 'w-[118px]' },
];

const lotDates = [
  { label: 'Date de fabrication', type: 'date' },
  { label: 'Délai de commercialisation', type: 'text' },
  { label: 'Périssable', type: 'check' },
  { label: 'Date de péremption', type: 'date' },
  { label: 'Durée de vie', type: 'text' },
  { label: "Date d'alerte à fin de vie", type: 'date' },
  { label: 'Alerter à mi-vie', type: 'check' },
  { label: "Date d'alerte à mi-vie", type: 'date' },
];

function LotForm() {
  return (
    <div className="mb-[7px] ml-[7px] mr-2.5 flex flex-1 items-start border border-[#a0a0a0] pl-2 pt-[5px] shadow-[inset_1px_1px_0_#fff,1px_1px_0_#fff]">
      <button type="button" className="mt-0.5 h-6 w-[68px] shrink-0 border border-[#a8a8b0] bg-linear-to-b from-[#f1f1f1] to-[#e4e4e4]">
        <Key text="_Nouveau" />
      </button>
      <div className="w-[257px] shrink-0">
        {lotFields.map((f) => (
          <div key={f.label} className="flex h-6 items-center">
            <label htmlFor={f.label} className={`mr-3 w-[47px] shrink-0 whitespace-nowrap ${etched}`}>
              <span className="flex justify-end">{f.label}</span>
            </label>
            <Field id={f.label} width={f.width} arrow={f.arrow} dots={f.dots} disabled />
          </div>
        ))}
      </div>
      <div className="ml-[14px] w-[252px] shrink-0">
        {lotDates.map((f) => (
          <div key={f.label} className="flex h-6 items-center">
            <label htmlFor={f.label} className={`w-[134px] whitespace-nowrap ${f.type === 'check' ? 'text-[#6d6d6d]' : etched}`}>
              {f.label}
            </label>
            {f.type === 'check' ? (
              <Check id={f.label} disabled />
            ) : (
              <Field id={f.label} width="w-[118px]" spin={f.type === 'date'} arrow={f.type === 'date'} disabled />
            )}
          </div>
        ))}
      </div>
      <div className="ml-[14px] mt-[3px] flex w-[110px] shrink-0 flex-col gap-[7px]">
        {['Enregistrer & _Fermer', '_Enregistrer', '_Annuler'].map((name) => (
          <button key={name} type="button" disabled className={`h-[22px] whitespace-nowrap bg-[#efefef] ${etched}`}>
            <Key text={name} />
          </button>
        ))}
      </div>
    </div>
  );
}

function LotDialog() {
  return (
    <div
      role="dialog"
      aria-labelledby="lot-title"
      className="absolute left-[318px] top-[123px] flex h-[514px] w-[769px] flex-col border border-[#6b6b6b] bg-[#969696] px-[7px] pb-[7px] font-['Liberation_Sans',Arial,sans-serif] text-[11px]"
    >
      <div className="relative flex h-[30px] shrink-0 items-center">
        <div className="absolute left-0.5 top-[7px]">
          <Icon name="bricks" />
        </div>
        <h2 id="lot-title" className="flex-1 text-center font-['Open_Sans','Noto_Sans',sans-serif] text-[14px] text-[#2b2b2b]">
          Affecter la quantité par lot, créer des lots : DOLIPRANE 1000mg
        </h2>
        <div className="absolute -right-px top-0 flex h-5 items-center">
          <button type="button" aria-label="Réduire" className="flex h-full w-[27px] items-center justify-center pt-1">
            <span className="h-0.5 w-2 bg-[#5a5a5a]" />
          </button>
          <button type="button" aria-label="Agrandir" className="flex h-full w-[27px] items-center justify-center">
            <span className="h-2 w-2.5 border border-t-2 border-[#222]" />
          </button>
          <button type="button" aria-label="Fermer" className="flex h-full w-[45px] items-center justify-center bg-[#c75050] text-white">
            <WindowX />
          </button>
        </div>
      </div>
      <div className="flex min-h-0 flex-1 flex-col border border-b-white border-l-[#5c5c5c] border-r-white border-t-[#5c5c5c] bg-[#dcd9e4]">
        <LotFilters />
        <LotTable />
        <LotForm />
      </div>
    </div>
  );
}

function StatusBar() {
  return (
    <footer className="flex h-5 shrink-0 items-center whitespace-nowrap bg-[#ff8a00] pl-0.5 text-[11px] text-white">
      <span className="min-w-0 flex-1">
        Ligne : 1 sur 1 ; Article : DOLIP1000 ; N° de lot(s) : 158745, 357951, 654615 (Lotté) ; Stock actuel : 1 200 (1 200) ; Stock disponible : 1 200 (1 200) ; Stock à terme : 1 200 (1 200)
      </span>
      <span className="w-[94px]">5.5.4</span>
      <span className="w-[134px]">MS SQL Server 2012</span>
      <span className="w-[100px]">DEMO</span>
    </footer>
  );
}

export default function App() {
  return (
    <div className="relative flex h-screen flex-col overflow-hidden bg-[#f3f3f3] font-['Open_Sans','Noto_Sans',sans-serif] text-xs text-black">
      <TitleBar />
      <MenuBar />
      <Toolbar />
      <DocumentTabs />
      <div className="flex min-h-0 flex-1">
        <Sidebar />
        <OrderForm />
      </div>
      <StatusBar />
      <LotDialog />
    </div>
  );
}
